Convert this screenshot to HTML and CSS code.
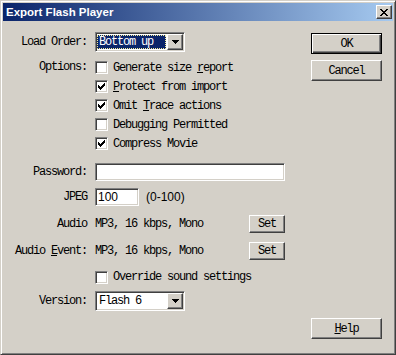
FILE: index.html
```html
<!DOCTYPE html>
<html lang="en">
<head>
    <meta charset="UTF-8">
    <title>Export Flash Player</title>
    <link rel="stylesheet" href="styles.css">
</head>
<body>
    <div class="window">
        <div class="titlebar">
            <span class="title">Export Flash Player</span>
            <button type="button" class="close raised">
                <svg width="8" height="7" viewBox="0 0 8 7" shape-rendering="crispEdges"><path d="M0 0h2v1H0zM6 0h2v1H6zM1 1h2v1H1zM5 1h2v1H5zM2 2h4v1H2zM3 3h2v1H3zM2 4h4v1H2zM1 5h2v1H1zM5 5h2v1H5zM0 6h2v1H0zM6 6h2v1H6z" fill="#000"/></svg>
            </button>
        </div>
        <div class="content">
            <div class="form">
                <div class="row r-load">
                    <span class="lbl">Load Order:</span>
                    <div class="combo sunken">
                        <span class="combo-text focus"><span class="hl">Bottom up</span></span>
                        <span class="drop raised">
                            <svg width="7" height="4" viewBox="0 0 7 4" shape-rendering="crispEdges"><path d="M0 0h7v1H0zM1 1h5v1H1zM2 2h3v1H2zM3 3h1v1H3z" fill="#000"/></svg>
                        </span>
                    </div>
                </div>

                <div class="row r-options">
                    <span class="lbl lbl-top">Options:</span>
                    <div class="checks">
                        <div class="check"><span class="cb sunken"></span><span>Generate size <u>r</u>eport</span></div>
                        <div class="check"><span class="cb sunken"><svg width="9" height="9" viewBox="0 0 9 9" shape-rendering="crispEdges"><path d="M1 3h1v3H1zM2 4h1v3H2zM3 5h1v3H3zM4 4h1v3H4zM5 3h1v3H5zM6 2h1v3H6zM7 1h1v3H7z" fill="#000"/></svg></span><span><u>P</u>rotect from import</span></div>
                        <div class="check"><span class="cb sunken"><svg width="9" height="9" viewBox="0 0 9 9" shape-rendering="crispEdges"><path d="M1 3h1v3H1zM2 4h1v3H2zM3 5h1v3H3zM4 4h1v3H4zM5 3h1v3H5zM6 2h1v3H6zM7 1h1v3H7z" fill="#000"/></svg></span><span>Omit <u>T</u>race actions</span></div>
                        <div class="check"><span class="cb sunken"></span><span>Debugging Permitted</span></div>
                        <div class="check"><span class="cb sunken"><svg width="9" height="9" viewBox="0 0 9 9" shape-rendering="crispEdges"><path d="M1 3h1v3H1zM2 4h1v3H2zM3 5h1v3H3zM4 4h1v3H4zM5 3h1v3H5zM6 2h1v3H6zM7 1h1v3H7z" fill="#000"/></svg></span><span>Compress Movie</span></div>
                    </div>
                </div>

                <div class="row r-password">
                    <span class="lbl">Password:</span>
                    <div class="field sunken password"></div>
                </div>

                <div class="row r-jpeg">
                    <span class="lbl">JPEG</span>
                    <div class="field sunken jpeg">100</div>
                    <span class="range">(0-100)</span>
                </div>

                <div class="row r-audio">
                    <span class="lbl">Audio</span>
                    <span class="value">MP3, 16 kbps, Mono</span>
                    <button type="button" class="btn raised set">Set</button>
                </div>

                <div class="row r-event">
                    <span class="lbl">Audio <u>E</u>vent:</span>
                    <span class="value">MP3, 16 kbps, Mono</span>
                    <button type="button" class="btn raised set">Set</button>
                </div>

                <div class="row r-override">
                    <span class="lbl"></span>
                    <div class="check"><span class="cb sunken"></span><span>Override sound settings</span></div>
                </div>

                <div class="row r-version">
                    <span class="lbl">Version:</span>
                    <div class="combo sunken">
                        <span class="combo-text plain">Flash 6</span>
                        <span class="drop raised">
                            <svg width="7" height="4" viewBox="0 0 7 4" shape-rendering="crispEdges"><path d="M0 0h7v1H0zM1 1h5v1H1zM2 2h3v1H2zM3 3h1v1H3z" fill="#000"/></svg>
                        </span>
                    </div>
                </div>
            </div>

            <div class="side">
                <button type="button" class="btn default">OK</button>
                <button type="button" class="btn raised cancel">Cancel</button>
                <button type="button" class="btn raised help"><span><u>H</u>elp</span></button>
            </div>
        </div>
    </div>
</body>
</html>
```

FILE: styles.css
```css
/* classic dialog palette */
:root {
    --face: #d4d0c8;
    --light: #ffffff;
    --shadow: #808080;
    --dark: #404040;
    --navy: #0a246a;
    --sky: #a6caf0;
}

* {
    margin: 0;
    padding: 0;
    box-sizing: border-box;
}

body {
    background: var(--face);
    color: #000;
    font-family: "Liberation Mono", "DejaVu Sans Mono", monospace;
    font-size: 12px;
    line-height: 14px;
    letter-spacing: -1.2px;
}

button {
    font: inherit;
    letter-spacing: inherit;
    color: inherit;
    background: var(--face);
    cursor: default;
}

.raised {
    border: 1px solid;
    border-color: var(--light) var(--dark) var(--dark) var(--light);
    box-shadow: inset -1px -1px var(--shadow);
}

.sunken {
    border: 1px solid;
    border-color: var(--shadow) var(--light) var(--light) var(--shadow);
    box-shadow: inset 1px 1px var(--dark), inset -1px -1px var(--face);
}

.window {
    width: 396px;
    height: 355px;
    display: flex;
    flex-direction: column;
    padding: 2px;
    background: var(--face);
    border: 1px solid;
    border-color: var(--face) var(--dark) var(--dark) var(--face);
    box-shadow: inset 1px 1px var(--light), inset -1px -1px var(--shadow);
}

/* title bar */
.titlebar {
    height: 18px;
    display: flex;
    align-items: center;
    padding: 0 1px 0 3px;
    background: linear-gradient(to right, var(--navy), var(--sky));
}

.title {
    color: #fff;
    font-family: "Liberation Sans", Arial, sans-serif;
    font-weight: bold;
    font-size: 11.5px;
    letter-spacing: 0;
}

.close {
    margin-left: auto;
    width: 16px;
    height: 14px;
    display: flex;
    align-items: center;
    justify-content: center;
}

/* body */
.content {
    flex: 1;
    display: flex;
}

.form {
    padding-top: 11px;
}

.row {
    display: flex;
    align-items: center;
}

.lbl {
    width: 84px;
    margin-right: 8px;
    flex-shrink: 0;
    text-align: right;
}

.lbl-top {
    align-self: flex-start;
    line-height: 19px;
}

.r-load { height: 20px; }
.r-options { margin-top: 6px; align-items: flex-start; }
.r-password { margin-top: 10px; height: 18px; }
.r-jpeg { margin-top: 7px; height: 18px; }
.r-audio { margin-top: 9px; height: 18px; }
.r-event { margin-top: 9px; height: 18px; }
.r-override { margin-top: 8px; height: 18px; }
.r-version { margin-top: 5px; height: 20px; }

/* combo box */
.combo {
    width: 90px;
    height: 20px;
    padding: 1px;
    display: flex;
    background: #fff;
}

.combo-text {
    flex: 1;
    height: 16px;
    display: flex;
    align-items: center;
}

.combo-text.focus {
    padding: 1px 1px 1px 0;
}

.combo-text.plain {
    padding-left: 2px;
}

.hl {
    flex: 1;
    height: 14px;
    line-height: 12px;
    padding-left: 1px;
    color: #fff;
    background: var(--navy);
    border: 1px dotted #f3ec9a;
}

.drop {
    width: 16px;
    height: 16px;
    display: flex;
    align-items: center;
    justify-content: center;
    background: var(--face);
}

/* checkboxes */
.check {
    height: 19px;
    display: flex;
    align-items: center;
}

.cb {
    width: 13px;
    height: 13px;
    margin-right: 5px;
    display: flex;
    align-items: center;
    justify-content: center;
    background: #fff;
}

/* text fields */
.field {
    height: 18px;
    padding: 0 2px;
    display: flex;
    align-items: center;
    background: #fff;
    font-family: "Liberation Sans", Arial, sans-serif;
    letter-spacing: 0;
}

.password { width: 190px; }
.jpeg { width: 44px; }

.range {
    margin-left: 7px;
    font-family: "Liberation Sans", Arial, sans-serif;
    letter-spacing: 0;
}

.value {
    width: 154px;
}

/* buttons */
.btn {
    width: 71px;
    height: 21px;
    display: flex;
    align-items: center;
    justify-content: center;
}

.set {
    width: 36px;
    height: 18px;
}

.default {
    border: 1px solid #000;
    box-shadow: inset 1px 1px var(--light), inset -1px -1px var(--dark), inset -2px -2px var(--shadow);
}

.side {
    margin-left: auto;
    margin-right: 11px;
    padding: 12px 0 13px;
    display: flex;
    flex-direction: column;
}

.cancel { margin-top: 6px; }
.help { margin-top: auto; }
```
